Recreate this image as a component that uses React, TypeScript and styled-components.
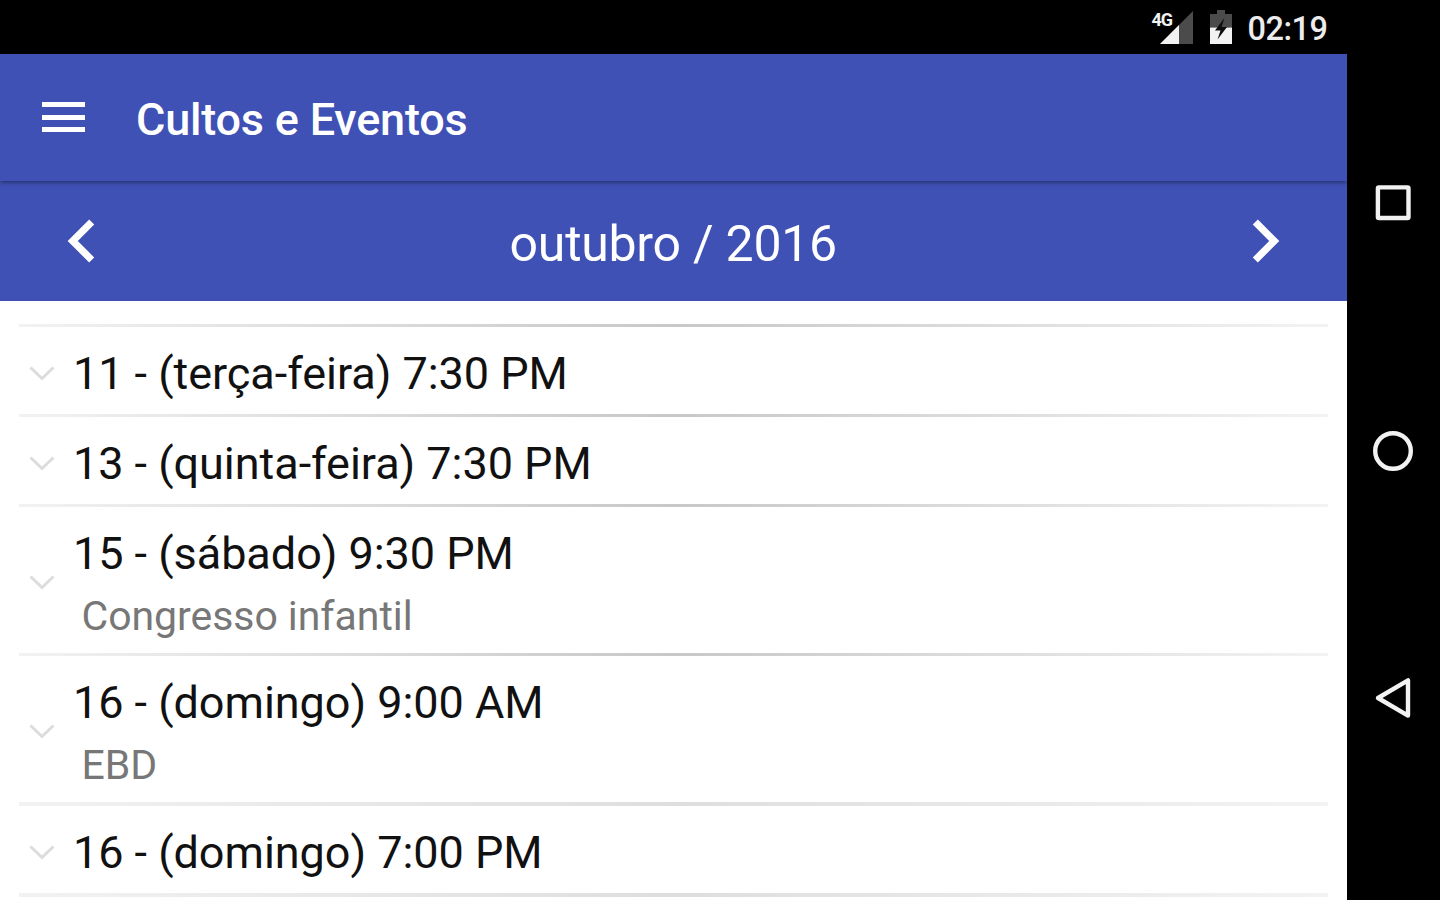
import styled, { createGlobalStyle } from "styled-components";

const events = [
  { id: 1, title: "11 - (terça-feira) 7:30 PM", height: 87 },
  { id: 2, title: "13 - (quinta-feira) 7:30 PM", height: 87 },
  {
    id: 3,
    title: "15 - (sábado) 9:30 PM",
    note: "Congresso infantil",
    height: 146,
  },
  {
    id: 4,
    title: "16 - (domingo) 9:00 AM",
    note: "EBD",
    height: 146,
  },
  { id: 5, title: "16 - (domingo) 7:00 PM", height: 87, light: true },
];

const App = () => {
  return (
    <Device>
      <GlobalStyle />
      <Screen>
        <StatusBar>
          <SignalIcon />
          <BatteryIcon />
          <Clock>02:19</Clock>
        </StatusBar>
        <AppBar>
          <MenuButton aria-label="Menu">
            <Bar />
            <Bar />
            <Bar />
          </MenuButton>
          <Title>Cultos e Eventos</Title>
        </AppBar>
        <MonthBar>
          <Arrow viewBox="0 0 24 24">
            <path d="M15.41 7.41L14 6l-6 6 6 6 1.41-1.41L10.83 12z" />
          </Arrow>
          <Month>outubro / 2016</Month>
          <Arrow viewBox="0 0 24 24">
            <path d="M10 6L8.59 7.41 13.17 12l-4.58 4.59L10 18l6-6z" />
          </Arrow>
        </MonthBar>
        <List>
          {events.map((event) => (
            <li key={event.id}>
              <Divider $light={event.light} />
              <Row $height={event.height}>
                <Expand viewBox="0 0 26 16">
                  <path d="M1.5 1.5L13 12.5 24.5 1.5" />
                </Expand>
                <Texts>
                  <EventTitle>{event.title}</EventTitle>
                  {event.note && <EventNote>{event.note}</EventNote>}
                </Texts>
              </Row>
            </li>
          ))}
          <Divider $light />
        </List>
      </Screen>
      <NavBar>
        <NavIcon viewBox="0 0 44 44">
          <rect x="6.9" y="6.4" width="30.6" height="30.6" rx="1" />
        </NavIcon>
        <NavIcon viewBox="0 0 44 44">
          <circle cx="22" cy="22" r="17.8" />
        </NavIcon>
        <NavIcon viewBox="0 0 44 44">
          <path d="M37 4.4V39.6L7 22z" />
        </NavIcon>
      </NavBar>
    </Device>
  );
};

export default App;

const SignalIcon = () => (
  <Signal viewBox="0 0 44 36">
    <path d="M42 2V35H9z" fill="#4b4b4b" />
    <path d="M28 16V35H9z" fill="#f2f2f2" />
    <path d="M0 0H22V17.5H0z" fill="#000" />
    <text x="0.5" y="16.5">
      4G
    </text>
  </Signal>
);

const BatteryIcon = () => (
  <Battery viewBox="0 0 24 36">
    <path d="M8 1h8v4h7v13.5H1V5h7z" fill="#4b4b4b" />
    <path d="M1 18.5h22V35H1z" fill="#f2f2f2" />
    <path d="M15.5 9L6 21.5h5.5l-3 9L18 18h-5.5z" fill="#0c0c0c" />
  </Battery>
);

const GlobalStyle = createGlobalStyle`
  * {
    box-sizing: border-box;
  }

  body {
    margin: 0;
    background: #000;
    font-family: Roboto, "Noto Sans", sans-serif;
    overflow: hidden;
  }
`;

const Device = styled.div`
  display: flex;
  width: 1440px;
  height: 900px;
  overflow: hidden;
  background: #000;
`;

const Screen = styled.div`
  display: flex;
  flex-direction: column;
  width: 1346.5px;
  height: 900px;
  overflow: hidden;
  background: #fff;
`;

const StatusBar = styled.div`
  display: flex;
  flex: none;
  justify-content: flex-end;
  align-items: center;
  height: 54px;
  padding-right: 19px;
  background: #000;
`;

const Signal = styled.svg`
  width: 44px;
  height: 36px;
  margin-right: 14px;

  text {
    font-size: 18px;
    font-weight: 700;
    letter-spacing: -1.2px;
    fill: #f2f2f2;
  }
`;

const Battery = styled.svg`
  width: 24px;
  height: 36px;
  margin-right: 15px;
`;

const Clock = styled.span`
  padding-top: 3px;
  color: #ececec;
  font-size: 32.5px;
  font-weight: 500;
  line-height: 36px;
  letter-spacing: -0.5px;
`;

const AppBar = styled.header`
  position: relative;
  display: flex;
  flex: none;
  align-items: center;
  height: 127px;
  padding-left: 42px;
  color: #fff;
  background: #3f51b5;
  box-shadow: 0 1px 5px rgba(0, 0, 0, 0.48);
`;

const MenuButton = styled.button`
  display: flex;
  flex-direction: column;
  gap: 7.5px;
  width: 43px;
  margin: 0 51px 1px 0;
  padding: 0;
  border: 0;
  background: none;
`;

const Bar = styled.span`
  height: 5px;
  background: #fff;
`;

const Title = styled.h1`
  margin: 5px 0 0;
  font-size: 45px;
  font-weight: 500;
  line-height: 54px;
  letter-spacing: -0.2px;
`;

const MonthBar = styled.div`
  display: flex;
  flex: none;
  justify-content: space-between;
  align-items: center;
  height: 119.5px;
  padding: 0 38.5px;
  color: #fff;
  background: #3f51b5;
`;

const Arrow = styled.svg`
  width: 86px;
  height: 86px;
  fill: currentColor;
`;

const Month = styled.h2`
  margin: 7px 0 0;
  font-size: 50px;
  font-weight: 400;
  line-height: 60px;
  letter-spacing: -0.25px;
`;

const List = styled.ul`
  margin: 0;
  padding: 23px 19px 0 19px;
  list-style: none;
`;

const Divider = styled.div<{ $light?: boolean }>`
  height: ${(props) => (props.$light ? 4 : 3)}px;
  background: linear-gradient(
    to right,
    #f2f2f2,
    ${(props) => (props.$light ? "#dedede" : "#c8c8c8")} 50%,
    #f3f3f3
  );
`;

const Row = styled.div<{ $height: number }>`
  display: flex;
  align-items: center;
  height: ${(props) => props.$height}px;
  padding-left: 10px;
`;

const Expand = styled.svg`
  flex: none;
  width: 26px;
  height: 16px;
  margin: 7px 18px 0 0;
  fill: none;
  stroke: #dcdcdc;
  stroke-width: 3;
`;

const Texts = styled.div`
  display: flex;
  flex-direction: column;
  padding-top: 8px;
`;

const EventTitle = styled.span`
  color: #111;
  font-size: 45px;
  line-height: 60px;
  letter-spacing: -0.04px;
`;

const EventNote = styled.span`
  margin: 2px 0 -2px 8.5px;
  color: #777;
  font-size: 41px;
  line-height: 60px;
  letter-spacing: -0.05px;
`;

const NavBar = styled.nav`
  display: flex;
  flex: none;
  flex-direction: column;
  align-items: center;
  gap: 203.5px;
  width: 93.5px;
  padding-top: 181px;
  background: #000;
`;

const NavIcon = styled.svg`
  flex: none;
  width: 44px;
  height: 44px;
  fill: none;
  stroke: #f2f2f2;
  stroke-width: 4.4;
  stroke-linejoin: round;
`;
